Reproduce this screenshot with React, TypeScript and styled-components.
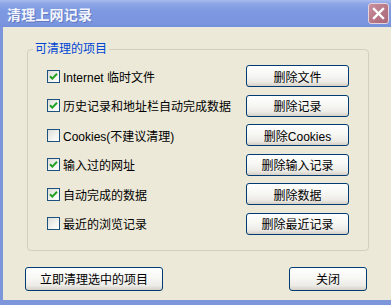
import React, { useState } from "react";
import styled, { createGlobalStyle } from "styled-components";

const GlobalStyle = createGlobalStyle`
  html, body {
    margin: 0;
    padding: 0;
    background: #ece9d8;
  }
  * {
    box-sizing: border-box;
  }
`;

type Item = {
  label: string;
  action: string;
  checked: boolean;
};

const items: Item[] = [
  { label: "Internet 临时文件", action: "删除文件", checked: true },
  { label: "历史记录和地址栏自动完成数据", action: "删除记录", checked: true },
  { label: "Cookies(不建议清理)", action: "删除Cookies", checked: false },
  { label: "输入过的网址", action: "删除输入记录", checked: true },
  { label: "自动完成的数据", action: "删除数据", checked: true },
  { label: "最近的浏览记录", action: "删除最近记录", checked: false },
];

const App = () => {
  const [checks, setChecks] = useState(items.map((i) => i.checked));

  const toggle = (idx: number) => {
    setChecks((prev) => prev.map((c, i) => (i === idx ? !c : c)));
  };

  return (
    <>
      <GlobalStyle />
      <Window>
        <TitleBar>
          <Title>清理上网记录</Title>
          <CloseButton aria-label='关闭'>
            <svg width='13' height='13' viewBox='0 0 13 13'>
              <path
                d='M2 2 L11 11 M11 2 L2 11'
                stroke='#fff'
                strokeWidth='2.4'
                strokeLinecap='square'
              />
            </svg>
          </CloseButton>
        </TitleBar>
        <Body>
          <GroupBox>
            <Legend>可清理的项目</Legend>
            <Rows>
              {items.map((item, idx) => (
                <React.Fragment key={item.label}>
                  <CheckLabel onClick={() => toggle(idx)}>
                    <CheckBox>
                      {checks[idx] && (
                        <svg width='9' height='9' viewBox='0 0 9 9'>
                          <path
                            d='M1 4.2 L3.3 6.6 L8 1.8'
                            stroke='#21a121'
                            strokeWidth='2'
                            fill='none'
                          />
                        </svg>
                      )}
                    </CheckBox>
                    <span>{item.label}</span>
                  </CheckLabel>
                  <XpButton $width={103} $height={22}>
                    {item.action}
                  </XpButton>
                </React.Fragment>
              ))}
            </Rows>
          </GroupBox>
          <Footer>
            <XpButton $width={138} $height={24}>
              立即清理选中的项目
            </XpButton>
            <XpButton $width={78} $height={24}>
              关闭
            </XpButton>
          </Footer>
        </Body>
      </Window>
    </>
  );
};

export default App;

const Window = styled.div`
  width: 391px;
  height: 305px;
  display: flex;
  flex-direction: column;
  border-left: 3px solid #7d95da;
  border-bottom: 5px solid #7d95da;
  background: #ece9d8;
  font-family: "Liberation Sans", "Noto Sans CJK SC", sans-serif;
  font-size: 12px;
  color: #000;
`;

const TitleBar = styled.div`
  height: 27px;
  margin-left: -3px;
  padding: 0 2px 0 7px;
  display: flex;
  align-items: center;
  justify-content: space-between;
  background: linear-gradient(
    to bottom,
    #a9bcee 0%,
    #8ea7e6 12%,
    #7d99e1 40%,
    #7b96df 85%,
    #7590db 100%
  );
`;

const Title = styled.div`
  color: #f2f5fd;
  font-weight: bold;
  font-size: 14px;
  letter-spacing: 0.2px;
  text-shadow: 1px 1px 0 rgba(60, 80, 150, 0.45);
  font-family: "Noto Sans CJK SC", sans-serif;
`;

const CloseButton = styled.div`
  width: 21px;
  height: 21px;
  border-radius: 3px;
  border: 1px solid #e6d4dc;
  background: linear-gradient(135deg, #c9919f 0%, #b47484 60%, #a8687a 100%);
  display: flex;
  align-items: center;
  justify-content: center;
`;

const Body = styled.div`
  flex: 1;
  padding: 15px 24px 0 22px;
  display: flex;
  flex-direction: column;
`;

const GroupBox = styled.fieldset`
  margin: 0 -2px 0 2px;
  padding: 9px 19px 15px 19px;
  border: 1px solid #d0d0bf;
  border-radius: 4px;
  min-width: 0;
`;

const Legend = styled.legend`
  margin-left: -14px;
  padding: 0 2px;
  line-height: 14px;
  color: #0046d5;
  font-size: 12px;
`;

const Rows = styled.div`
  display: grid;
  grid-template-columns: 1fr auto;
  grid-auto-rows: 22px;
  row-gap: 7.5px;
  align-items: center;
`;

const CheckLabel = styled.label`
  display: flex;
  align-items: center;
  gap: 3px;
  white-space: nowrap;
  cursor: default;
`;

const CheckBox = styled.span`
  width: 13px;
  height: 13px;
  border: 1px solid #1c5180;
  background: linear-gradient(135deg, #dcdcd7 0%, #f4f4f1 60%, #ffffff 100%);
  display: flex;
  align-items: center;
  justify-content: center;
  flex-shrink: 0;
`;

const XpButton = styled.button<{ $width: number; $height: number }>`
  width: ${(p) => p.$width}px;
  height: ${(p) => p.$height}px;
  padding: 0;
  border: 1px solid #003c74;
  border-radius: 3px;
  background: linear-gradient(
    to bottom,
    #ffffff 0%,
    #f7f7f4 45%,
    #ecebe6 80%,
    #d6d0c5 100%
  );
  font-family: "Liberation Sans", "Noto Sans CJK SC", sans-serif;
  font-size: 12px;
  color: #000;
`;

const Footer = styled.div`
  margin-top: 16px;
  display: flex;
  justify-content: space-between;
  align-items: center;
`;
